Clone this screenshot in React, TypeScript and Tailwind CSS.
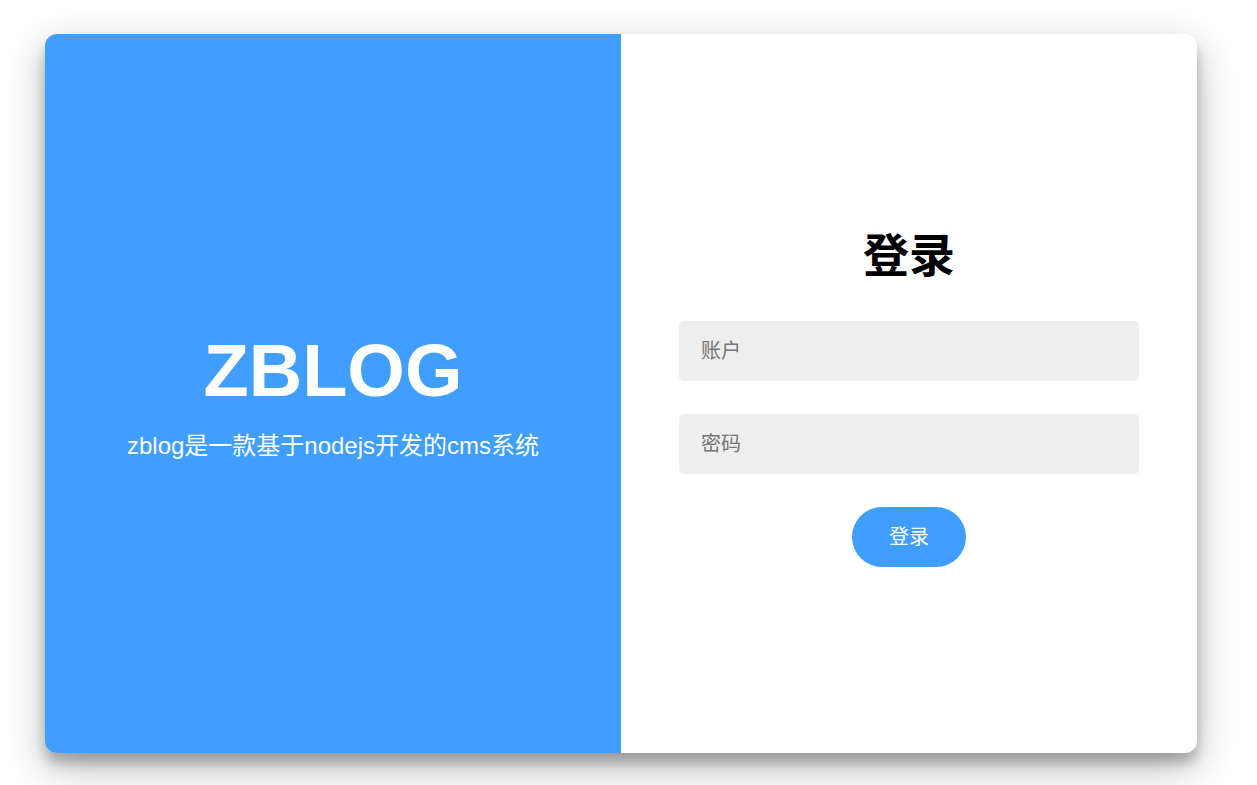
export default function App() {
  return (
    <div className="h-[785px] overflow-hidden bg-white pt-[34px] pl-[45px] font-['Liberation_Sans','Noto_Sans_CJK_SC',sans-serif]">
      <div className="flex h-[719px] w-[1152px] overflow-hidden rounded-[12px] bg-white shadow-[0_14px_40px_rgba(0,0,0,0.28),0_10px_12px_rgba(0,0,0,0.22)]">
        {/* left intro */}
        <section className="flex w-1/2 flex-col items-center justify-center bg-[#409eff] text-white">
          <h1 className="text-[74px] font-bold leading-[88px]">ZBLOG</h1>
          <p className="mt-[16px] text-[24px] leading-[30px]">zblog是一款基于nodejs开发的cms系统</p>
        </section>

        {/* login form */}
        <section className="flex w-1/2 flex-col items-center justify-center pt-[8px]">
          <h2 className="text-[46px] font-bold leading-[56px] text-black">登录</h2>
          <form className="mt-[37px] flex w-[460px] flex-col items-center">
            <input
              type="text"
              placeholder="账户"
              className="h-[60px] w-full rounded-[5px] bg-[#eeeeee] px-[22px] text-[20px] text-[#333] outline-none placeholder:text-[#757575]"
            />
            <input
              type="password"
              placeholder="密码"
              className="mt-[33px] h-[60px] w-full rounded-[5px] bg-[#eeeeee] px-[22px] text-[20px] text-[#333] outline-none placeholder:text-[#757575]"
            />
            <button
              type="button"
              className="mt-[33px] h-[60px] w-[114px] rounded-full bg-[#409eff] text-[20px] text-white"
            >
              登录
            </button>
          </form>
        </section>
      </div>
    </div>
  );
}
